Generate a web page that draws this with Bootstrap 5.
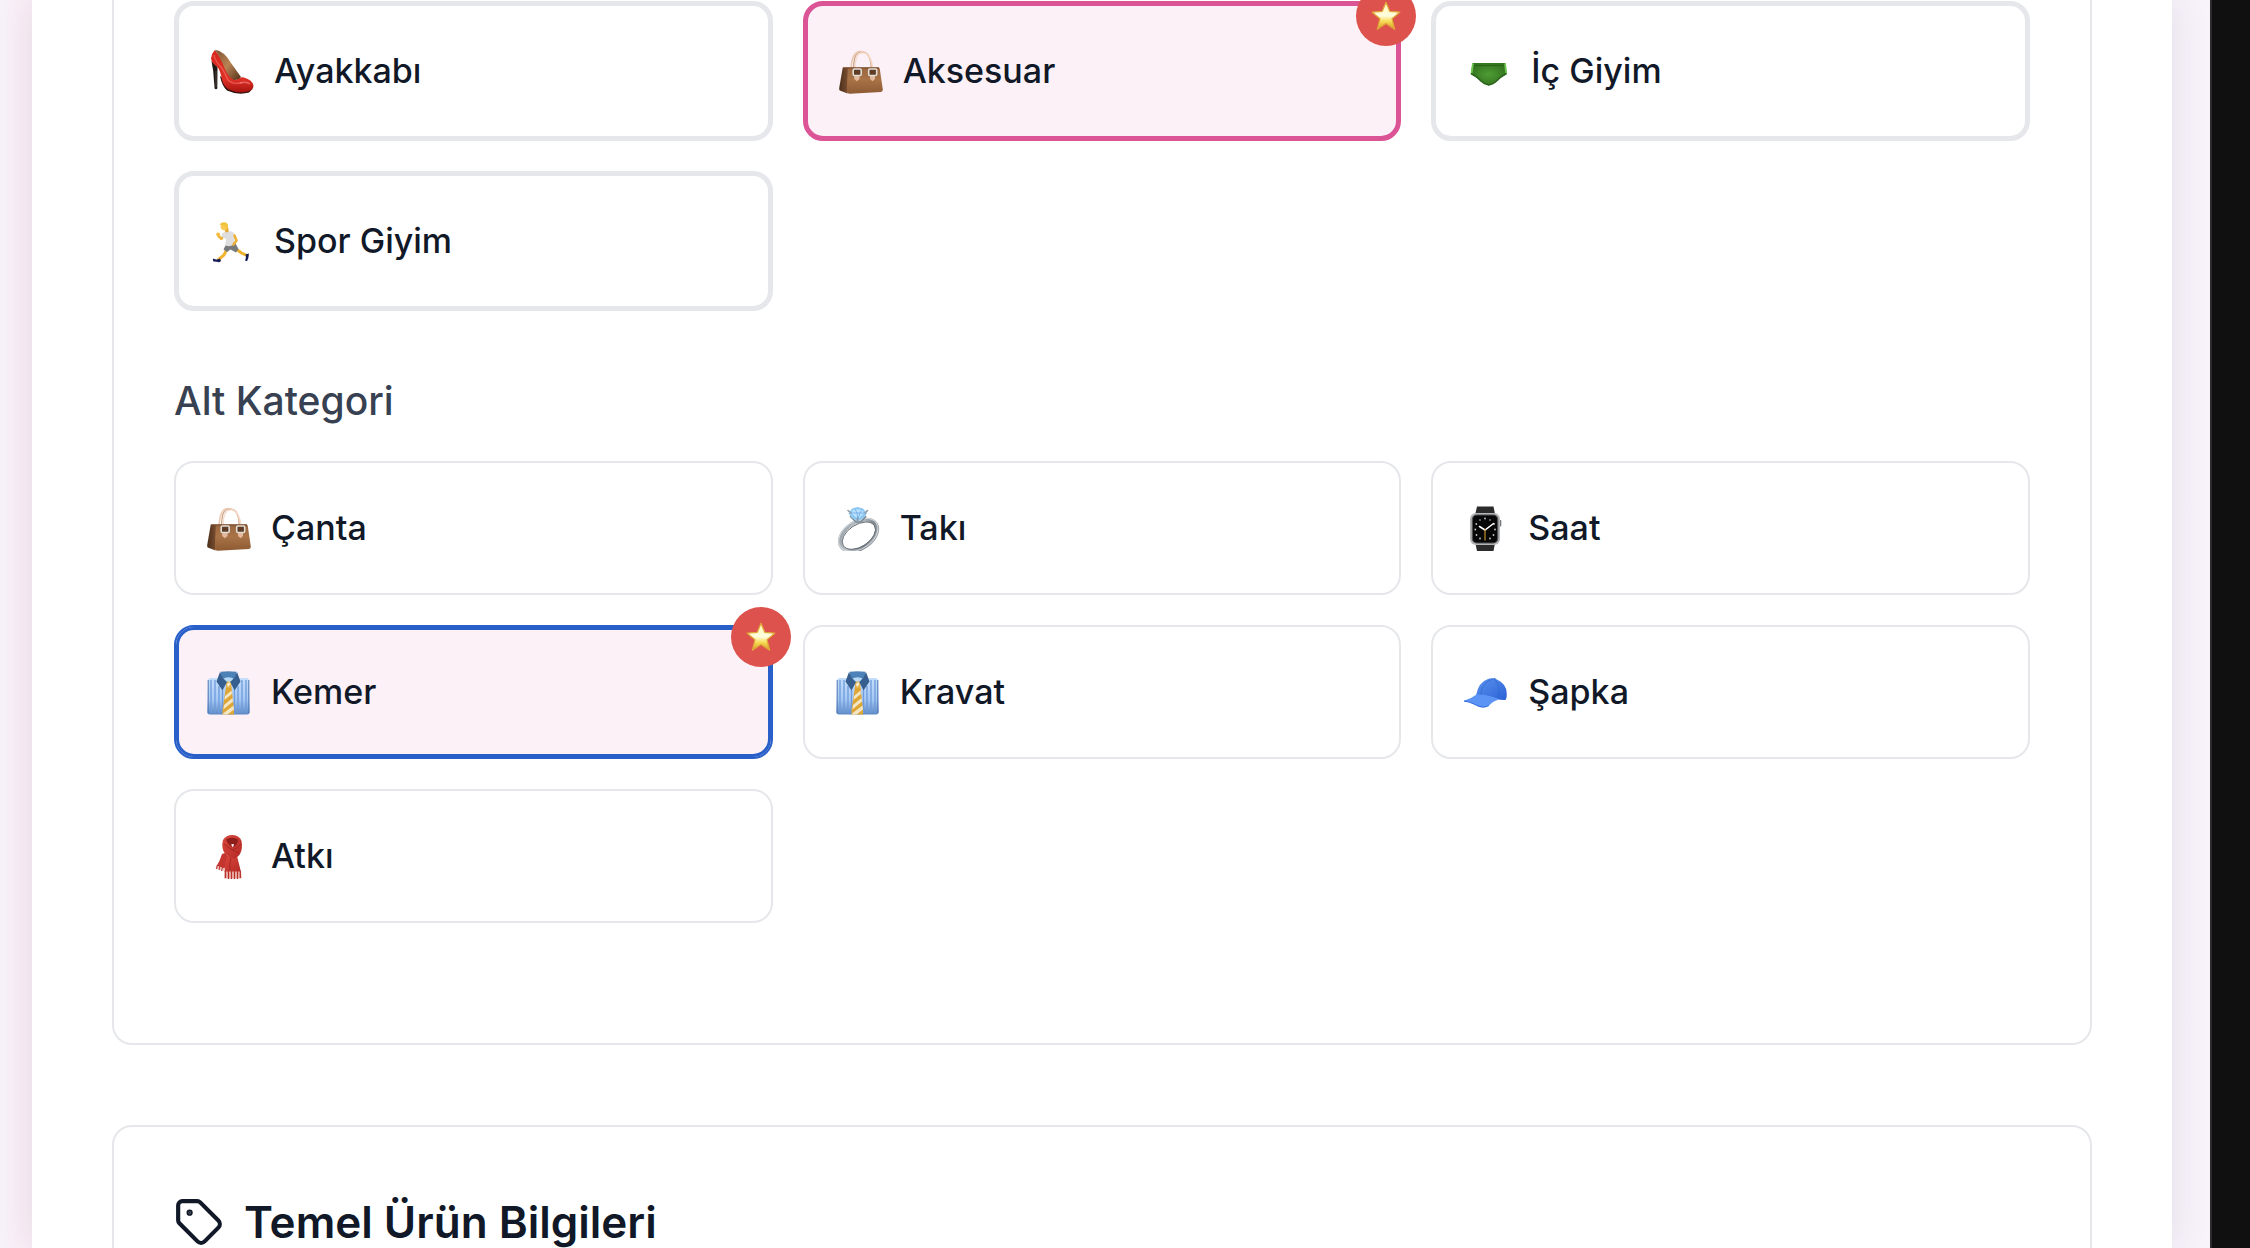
<!DOCTYPE html>
<html lang="tr">
<head>
<meta charset="utf-8">
<meta name="viewport" content="width=device-width, initial-scale=1">
<title>Ürün Ekle</title>
<link href="https://cdn.jsdelivr.net/npm/bootstrap@5.3.0/dist/css/bootstrap.min.css" rel="stylesheet">
<style>
  body { font-family: Inter, "Liberation Sans", sans-serif; color: #111827; height: 100vh; overflow: hidden; }
  .page-bg { background: linear-gradient(90deg, #f7f2fa 0, #fbeff8 20px, #fbeff8 60px, #f8f3fb 100%); padding: 0 38px 0 32px; }
  .side-strip { width: 40px; background: #101010; border-left: 2px solid #2c2c2e; }
  .panel { background: #fff; padding: 0 80px; box-shadow: 0 0 36px rgba(40, 30, 50, .11); }
  .section-box { border: 2px solid #e5e7eb; border-radius: 20px; padding: 60px; margin-bottom: 80px; }
  .section-first { border-top: 0; border-top-left-radius: 0; border-top-right-radius: 0; padding-top: 1px; padding-bottom: 120px; }
  .choice-grid { display: grid; grid-template-columns: repeat(3, minmax(0, 1fr)); gap: 30px; }
  .choice { gap: 20px; padding: 0 30px; background: #fff; border: 2px solid #e5e7eb; border-radius: 20px; color: #111827; font-size: 34px; font-weight: 500; line-height: 50px; height: 134px; }
  .choice-main { border-width: 5px; height: 140px; }
  .choice svg { width: 45px; height: 45px; flex: none; }
  .picked { background: #fbf1f7; }
  .choice-main.picked { border-color: #db5496; }
  .choice-sub.picked { border-color: #285fc9; box-shadow: inset 0 0 0 3px #285fc9; }
  .star-badge { position: absolute; top: -20px; right: -20px; width: 60px; height: 60px; background: #dd524c; }
  .choice .star-badge svg { width: 30px; height: 30px; }
  .sub-title { font-size: 39px; font-weight: 500; line-height: 60px; color: #374151; margin: 60px 0 30px; }
  .section-title { font-size: 44px; font-weight: 600; line-height: 70px; gap: 20px; }
  .section-title svg { width: 50px; height: 50px; }
</style>
<script src="https://cdn.jsdelivr.net/npm/bootstrap@5.3.0/dist/js/bootstrap.bundle.min.js"></script>
</head>
<body class="d-flex">
<svg width="0" height="0" class="position-absolute" aria-hidden="true">
  <defs>
    <linearGradient id="gBag" x1="0" y1="0" x2="0" y2="1"><stop offset="0" stop-color="#9a6740"/><stop offset=".45" stop-color="#a97347"/><stop offset="1" stop-color="#8d5a33"/></linearGradient>
    <linearGradient id="gSide" x1="0" y1="0" x2="1" y2="0"><stop offset="0" stop-color="#4c2f1c"/><stop offset="1" stop-color="#7c4f30"/></linearGradient>
    <linearGradient id="gShirt" x1="0" y1="0" x2="0" y2="1"><stop offset="0" stop-color="#c4defb"/><stop offset=".6" stop-color="#a5c8f4"/><stop offset="1" stop-color="#5c88c4"/></linearGradient>
    <linearGradient id="gStar" x1="0" y1="0" x2="0" y2="1"><stop offset="0" stop-color="#fff8b0"/><stop offset=".5" stop-color="#fffde0"/><stop offset=".7" stop-color="#f8dd58"/><stop offset="1" stop-color="#d99a28"/></linearGradient>
    <linearGradient id="gShoe" x1="0" y1="0" x2="0" y2="1"><stop offset="0" stop-color="#d9281c"/><stop offset=".7" stop-color="#dc3026"/><stop offset="1" stop-color="#a81310"/></linearGradient>
    <linearGradient id="gInner" x1="0" y1="0" x2="1" y2="1"><stop offset="0" stop-color="#7a5430"/><stop offset=".5" stop-color="#b98354"/><stop offset="1" stop-color="#51301a"/></linearGradient>
    <radialGradient id="gBrief"><stop offset="0" stop-color="#4e9c35"/><stop offset="1" stop-color="#35761f"/></radialGradient>
    <linearGradient id="gRing" x1="0" y1="0" x2="1" y2="1"><stop offset="0" stop-color="#8b949c"/><stop offset=".4" stop-color="#c3c9ce"/><stop offset=".7" stop-color="#7d858c"/><stop offset="1" stop-color="#b4bac0"/></linearGradient>
    <linearGradient id="gCap" x1="0" y1="0" x2="1" y2="1"><stop offset="0" stop-color="#5a92ef"/><stop offset="1" stop-color="#2b62d6"/></linearGradient>
    <linearGradient id="gScarf" x1="0" y1="0" x2="1" y2="1"><stop offset="0" stop-color="#d9463c"/><stop offset="1" stop-color="#b52a26"/></linearGradient>

    <symbol id="bag" viewBox="0 0 45 45">
      <path d="M15.500 23C15.500 9 17 3 24 3s9 6 9.500 20" fill="none" stroke="#caa184" stroke-width="1.200"/>
      <path d="M13 21C13.500 7 17 2.500 22 2.500c6 0 11 5 12.500 17" fill="none" stroke="#ecc9b2" stroke-width="1.600"/>
      <path d="M17 21C17 8 20 4 25 4c6 0 9 5 10 17" fill="none" stroke="#f6dccb" stroke-width="1.200"/>
      <path d="M4.700 18.800 10.500 18.800 9.500 44.500 1.800 41.500Q1 41 1.200 39Z" fill="url(#gSide)"/>
      <path d="M9.800 18.800H40.500Q41.600 18.800 41.800 20L44.800 40.500Q45 42.500 43 42.900L12 44.800Q9.200 44.900 8.800 42.500Z" fill="url(#gBag)"/>
      <path d="M5 18.900H41" stroke="#7b4a2b" stroke-width="1.200"/>
      <path d="M16.200 26H21.500V30L18.800 32.300 16.200 30ZM32 26h5v4l-2.500 2.300L32 30Z" fill="#e3b89c"/>
      <rect x="15.200" y="20" width="8" height="6.500" rx="1.200" fill="#5e3c26" stroke="#e2ddd5" stroke-width="1.600"/>
      <rect x="30.700" y="20" width="8" height="6.500" rx="1.200" fill="#5e3c26" stroke="#e2ddd5" stroke-width="1.600"/>
    </symbol>

    <symbol id="tie" viewBox="0 0 45 45">
      <path d="M4 8H41Q43 8.500 43.200 11L43.700 42Q43.600 44.500 41 44.500H4Q1.400 44.500 1.300 42L2 11Q2 8.500 4 8Z" fill="url(#gShirt)"/>
      <path d="M5 10V43M9 10V43M13 16V43M16.500 20V43M28.500 20V43M32 16V43M36 10V43M40 10V43" stroke="#6f9bdb" stroke-width="1.300"/>
      <path d="M2.200 10V43M42.800 10V43" stroke="#5179b2" stroke-width="1"/>
      <path d="M14.500 1.800Q22.500 .6 30.500 1.800L29 11 22.500 14 16 11Z" fill="#4d82b8"/>
      <path d="M16.500 9Q22.500 5.500 28.500 9L22.500 13.500Z" fill="#b5d8f5"/>
      <path d="M20 17H25.500L28 40V44.500H16.500V40Z" fill="#dfa634"/>
      <path d="M19 26 25.500 20.500 25.900 24 18.500 30ZM18 35 26.500 28 27 31.500 17.300 39.500ZM17 43.500 27.500 35.500 28 39.500 21.500 44.500H17Z" fill="#f3e6c5"/>
      <path d="M19.500 12.500Q22.500 10.500 25.800 12.500L25.300 17.500Q22.700 19 20.200 17.500Z" fill="#e3b34e"/>
      <path d="M21 14 23.500 12.300 24.500 14 22 17Z" fill="#faf0d8"/>
      <path d="M14 2 16.500 7.500 21 12 16.500 20.500 10.500 11.500Z" fill="#365f90"/>
      <path d="M31 2 28.500 7.500 24.300 12 28.500 20.500 34.500 11.500Z" fill="#365f90"/>
    </symbol>

    <symbol id="star" viewBox="0 0 30 30">
      <path d="M15 1.200 18.700 10.300 28.800 11.200 21 17.700 23.700 28.300 15 22.600 6.300 28.300 9 17.700 1.200 11.200 11.300 10.300Z" fill="url(#gStar)" stroke="#dfa638" stroke-width="1.200" stroke-linejoin="round"/>
    </symbol>
  </defs>
</svg>

<div class="page-bg flex-grow-1 overflow-hidden">
  <main class="panel h-100">
    <section class="section-box section-first">
      <div class="choice-grid">
        <button type="button" class="choice choice-main d-flex align-items-center text-start position-relative">
          <svg viewBox="0 0 45 45" aria-hidden="true">
            <path d="M2.500 12 8.500 18 8.300 39.500Q7 41 5.600 39.500L4.200 22Z" fill="#1d1715"/>
            <path d="M7 22V38" stroke="#5c5552" stroke-width=".8"/>
            <path d="M11 27Q13 37 18 41.500 29 46.500 40 43.500L43.500 40 30 41Z" fill="#2a100d"/>
            <path d="M5.800 1Q2.500 4.500 2 9.500 2.500 14 8.500 18 11.500 22 12.500 29 14 37 19.500 40.500 29 45 39 42.500 44.500 41 44.500 36.500 43.500 31 35 28.500 31.500 27.500 27.500 30.500 21.500 30 18.500 21.500 12.500 9 5.800 1Z" fill="url(#gShoe)"/>
            <path d="M6 .8Q15 2 22 14L32 28Q29 31.500 25 31 19 28 15.500 19 11 8 6 .8Z" fill="url(#gInner)"/>
            <path d="M5 6Q6 12 12.500 18.500 16 24 19 31 24 36 33 33.500" fill="none" stroke="#f5756b" stroke-width="1.400" opacity=".6"/>
            <path d="M31 34Q37 32 41 35" fill="none" stroke="#f58b82" stroke-width="1.500" opacity=".6"/>
          </svg>
          <span>Ayakkabı</span>
        </button>
        <button type="button" class="choice choice-main picked d-flex align-items-center text-start position-relative" aria-pressed="true">
          <svg aria-hidden="true"><use href="#bag"/></svg>
          <span>Aksesuar</span>
          <span class="star-badge rounded-circle d-flex align-items-center justify-content-center"><svg aria-hidden="true"><use href="#star"/></svg></span>
        </button>
        <button type="button" class="choice choice-main d-flex align-items-center text-start position-relative">
          <svg viewBox="0 0 45 45" aria-hidden="true">
            <path d="M6.500 14H39.500L40.700 25Q35 28 31 32 27 36 22.800 36.300 18.500 36 14.500 32 10.500 28 4.800 25Z" fill="url(#gBrief)"/>
            <path d="M7 16.500H39" stroke="#296418" stroke-width="1.200"/>
            <path d="M7 14.500 5.500 24.500M39 14.500 40.200 24.500" stroke="#6fc653" stroke-width="1.800"/>
            <path d="M5 24.500Q11 27.500 15 32 18.500 35.500 22.800 36 27 35.500 30.500 32 34.500 27.500 40.500 24.500" fill="none" stroke="#2d641d" stroke-width="1.600"/>
          </svg>
          <span>İç Giyim</span>
        </button>
        <button type="button" class="choice choice-main d-flex align-items-center text-start position-relative">
          <svg viewBox="0 0 45 45" aria-hidden="true">
            <path d="M27 30 32.500 34 38 36.500" fill="none" stroke="#eeb02c" stroke-width="3" stroke-linecap="round"/>
            <path d="M18 30 15 36 9.500 40.500" fill="none" stroke="#f0b431" stroke-width="3" stroke-linecap="round"/>
            <path d="M4 39.500Q8 41.500 11 39.500L12 42Q10 44 8 42.800L4.500 42.500Q3.500 41 4 39.500Z" fill="#141b56"/>
            <path d="M36.500 35.500 39.800 34.500Q40 39 38 42.200L36 41.500Q37.500 38.500 36.500 35.500Z" fill="#141b56"/>
            <path d="M17 25.500 26.500 24.500 29.500 30 27 33.500 21.500 30.500 18 33 14.500 30.500Z" fill="#77797b"/>
            <path d="M14.500 16.500 12.500 20 9.500 17" fill="none" stroke="#efb53a" stroke-width="2.500" stroke-linecap="round" stroke-linejoin="round"/>
            <circle cx="9.200" cy="15.600" r="2" fill="#f3bd42"/>
            <path d="M13.500 14Q18 11.500 22.500 12.500 25.500 13.500 26 17L24.500 26Q20.500 28 16.500 26.500L17 20 12.500 17.500Z" fill="#dededf"/>
            <path d="M25.500 16.500 27.500 21.500 24.500 25.500" fill="none" stroke="#edb034" stroke-width="2.500" stroke-linecap="round" stroke-linejoin="round"/>
            <path d="M15 9H19.500V13L16.500 13.500Z" fill="#e5a936"/>
            <circle cx="15.300" cy="7.500" r="3.700" fill="#f8ca55"/>
            <path d="M10.800 5.800Q11.500 3 15.500 3.200 19.500 3.500 19 8.500L17.500 10.500 16 6.500Z" fill="#efc53e"/>
          </svg>
          <span>Spor Giyim</span>
        </button>
      </div>

      <h3 class="sub-title">Alt Kategori</h3>

      <div class="choice-grid">
        <button type="button" class="choice choice-sub d-flex align-items-center text-start position-relative">
          <svg aria-hidden="true"><use href="#bag"/></svg>
          <span>Çanta</span>
        </button>
        <button type="button" class="choice choice-sub d-flex align-items-center text-start position-relative">
          <svg viewBox="0 0 45 45" aria-hidden="true">
            <g transform="rotate(-33 24 29)">
              <ellipse cx="23.500" cy="29" rx="20.500" ry="13" fill="none" stroke="url(#gRing)" stroke-width="4"/>
              <ellipse cx="23.500" cy="28.500" rx="21.500" ry="14" fill="none" stroke="#d3d8dc" stroke-width="1"/>
              <ellipse cx="23.500" cy="29.500" rx="18.500" ry="11" fill="none" stroke="#636b72" stroke-width=".9"/>
            </g>
            <path d="M15 10 21 16H26L31 10" fill="none" stroke="#788995" stroke-width="1.600"/>
            <path d="M17 2.500 22.500 1 28 2.500 32 7.500 28.500 12 22.500 15 17 12 13.500 7.500Z" fill="#8ec7f2"/>
            <path d="M18 3.500H27L29 7.500 23 13 16.500 7.500Z" fill="#b8e2ff"/>
            <path d="M17 7H29M20 3 22 7 23 13 25 7 27 3" fill="none" stroke="#6fa8e3" stroke-width=".8"/>
            <path d="M13 4.500 16 7M32.500 4.500 30 7M22.500 12V15.500" stroke="#8b9aa5" stroke-width="1.600" stroke-linecap="round"/>
          </svg>
          <span>Takı</span>
        </button>
        <button type="button" class="choice choice-sub d-flex align-items-center text-start position-relative">
          <svg viewBox="0 0 45 45" aria-hidden="true">
            <path d="M14 .5H30.500L32 8H12.300ZM12.300 37H32L30.500 45H14Z" fill="#2b2b2c"/>
            <rect x="36" y="14" width="2.300" height="6.500" rx="1" fill="#77787a"/>
            <rect x="7" y="7" width="30" height="32" rx="6" fill="#b4b5b7"/>
            <rect x="8.800" y="8.500" width="26.500" height="29" rx="5" fill="#4d4e50"/>
            <rect x="10" y="9.500" width="24" height="27" rx="4" fill="#070708"/>
            <g fill="#c5c5c5"><circle cx="22" cy="12.500" r=".9"/><circle cx="17" cy="14" r=".8"/><circle cx="27" cy="14" r=".8"/><circle cx="13.300" cy="18" r=".9"/><circle cx="31" cy="18" r=".9"/><circle cx="12.300" cy="23.500" r=".9"/><circle cx="32" cy="23.500" r=".9"/><circle cx="13.500" cy="29" r=".9"/><circle cx="30.500" cy="29" r=".9"/><circle cx="17" cy="32.500" r=".9"/><circle cx="27" cy="32.500" r=".9"/></g>
            <path d="M16.500 20.500 22 24 30.500 17.500" fill="none" stroke="#fff" stroke-width="1.500" stroke-linecap="round"/>
            <path d="M22 23V34.500" stroke="#d29a32" stroke-width="1.100"/>
          </svg>
          <span>Saat</span>
        </button>
        <button type="button" class="choice choice-sub picked d-flex align-items-center text-start position-relative" aria-pressed="true">
          <svg aria-hidden="true"><use href="#tie"/></svg>
          <span>Kemer</span>
          <span class="star-badge rounded-circle d-flex align-items-center justify-content-center"><svg aria-hidden="true"><use href="#star"/></svg></span>
        </button>
        <button type="button" class="choice choice-sub d-flex align-items-center text-start position-relative">
          <svg aria-hidden="true"><use href="#tie"/></svg>
          <span>Kravat</span>
        </button>
        <button type="button" class="choice choice-sub d-flex align-items-center text-start position-relative">
          <svg viewBox="0 0 45 45" aria-hidden="true">
            <path d="M13 25.500Q15.500 12 25 9 29 7.500 34 9.500 43.500 14 43.700 23 44 28 42.500 30 38 30.500 33 28.500Z" fill="url(#gCap)"/>
            <path d="M29.500 8.500Q32 7.200 33 9Z" fill="#2e64cf"/>
            <path d="M30 9Q19 12 17.500 25M31.500 9Q37 15 36 28.500" fill="none" stroke="#3267cc" stroke-width=".7"/>
            <path d="M13.500 24.500Q8 29 .7 30.700 1 32.500 5 32 10 33 15 36.500 21 39 26 35.500 30 31 36 29.500 25 24 13.500 24.500Z" fill="#5b94f5"/>
            <path d="M1 31Q6 31.500 12 34.500 20 39 26 35.500" fill="none" stroke="#3a70da" stroke-width="1"/>
          </svg>
          <span>Şapka</span>
        </button>
        <button type="button" class="choice choice-sub d-flex align-items-center text-start position-relative">
          <svg viewBox="0 0 45 45" aria-hidden="true">
            <path d="M19 19 23.500 24 17.500 36 10 33Q14 27 16 20Z" fill="#c5352f"/>
            <path d="M10.500 31.500 19 34.500 17.500 37 9.500 34.500Z" fill="#efc5c0"/>
            <path d="M11.500 31 10.500 35M14 32 13 36M16.500 33 15.500 37" stroke="#b92e29" stroke-width="1"/>
            <path d="M21 22H31Q33 30 35 38L18.500 38Q18.500 30 21 22Z" fill="url(#gScarf)"/>
            <path d="M18.500 37.500H35L35.800 44.500H18Z" fill="#eebbb5"/>
            <path d="M19.500 37V44M22.500 37V45M25.500 37V45M28.500 37V45M31.500 37V45M34.300 37V44" stroke="#b92e29" stroke-width="1.300"/>
            <path d="M17 6Q20 1 26.500 1 33.500 1.500 35.500 7 37 14 34 20 31 25 26 24 17.500 21 16.500 14 16 9 17 6Z" fill="url(#gScarf)"/>
            <path d="M20 5.500Q26 2 32 5.500 32 11 27 13.500 22 11 20 5.500Z" fill="#8e1d1c"/>
            <path d="M25 10.500 28 10 27 13.500Z" fill="#fff"/>
            <path d="M18 10Q23 15 33 19M35 10Q31 15 26 16M25 24Q23 30 24 36" fill="none" stroke="#a32421" stroke-width=".9"/>
          </svg>
          <span>Atkı</span>
        </button>
      </div>
    </section>

    <section class="section-box">
      <h2 class="section-title d-flex align-items-center mb-0">
        <svg viewBox="0 0 24 24" fill="none" stroke="currentColor" stroke-width="2" stroke-linecap="round" stroke-linejoin="round" aria-hidden="true">
          <path d="M12.586 2.586A2 2 0 0 0 11.172 2H4a2 2 0 0 0-2 2v7.172a2 2 0 0 0 .586 1.414l8.704 8.704a2.426 2.426 0 0 0 3.420 0l6.580-6.580a2.426 2.426 0 0 0 0-3.420z"/>
          <circle cx="7.500" cy="7.500" r=".5" fill="currentColor"/>
        </svg>
        <span>Temel Ürün Bilgileri</span>
      </h2>
    </section>
  </main>
</div>
<aside class="side-strip flex-shrink-0"></aside>
</body>
</html>
